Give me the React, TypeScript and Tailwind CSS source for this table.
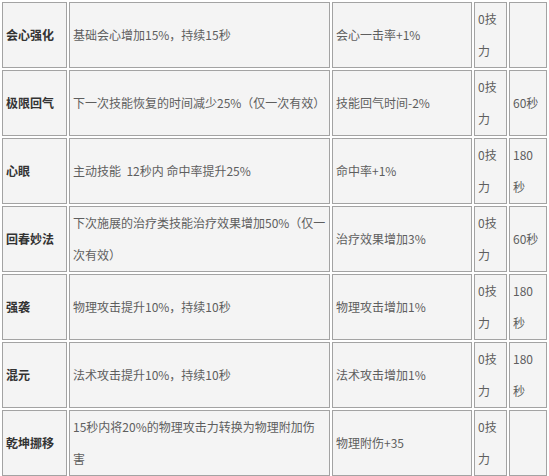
import React from 'react'

const rows = [
  ['会心强化', '基础会心增加15%，持续15秒', '会心一击率+1%', '0技力', ''],
  ['极限回气', '下一次技能恢复的时间减少25%（仅一次有效）', '技能回气时间-2%', '0技力', '60秒'],
  ['心眼', '主动技能  12秒内 命中率提升25%', '命中率+1%', '0技力', '180秒'],
  ['回春妙法', '下次施展的治疗类技能治疗效果增加50%（仅一次有效）', '治疗效果增加3%', '0技力', '60秒'],
  ['强袭', '物理攻击提升10%，持续10秒', '物理攻击增加1%', '0技力', '180秒'],
  ['混元', '法术攻击提升10%，持续10秒', '法术攻击增加1%', '0技力', '180秒'],
  ['乾坤挪移', '15秒内将20%的物理攻击力转换为物理附加伤害', '物理附伤+35', '0技力', ''],
]

const cell = 'border border-[#a3a3a3] bg-[#f4f4f4] px-[3px] py-0 align-middle h-[66px] leading-[32px] whitespace-pre-wrap break-all'

const App = () => {
  return (
    <div className="w-[549px] h-[476px] overflow-hidden bg-white text-[12px] text-[#5e5e5e]" style={{ fontFamily: '"Noto Sans CJK SC", "Noto Sans", sans-serif' }}>
      <table className="table-fixed w-[549px] border-separate border-spacing-[2px]">
        <colgroup>
          <col className="w-[65px]" />
          <col className="w-[261px]" />
          <col className="w-[140px]" />
          <col className="w-[33px]" />
          <col className="w-[38px]" />
        </colgroup>
        <tbody>
          {rows.map((r) => (
            <tr key={r[0]}>
              <td className={cell + ' font-bold text-[#333]'}>{r[0]}</td>
              <td className={cell}>{r[1]}</td>
              <td className={cell}>{r[2]}</td>
              <td className={cell}>{r[3]}</td>
              <td className={cell}>{r[4]}</td>
            </tr>
          ))}
        </tbody>
      </table>
    </div>
  )
}

export default App
